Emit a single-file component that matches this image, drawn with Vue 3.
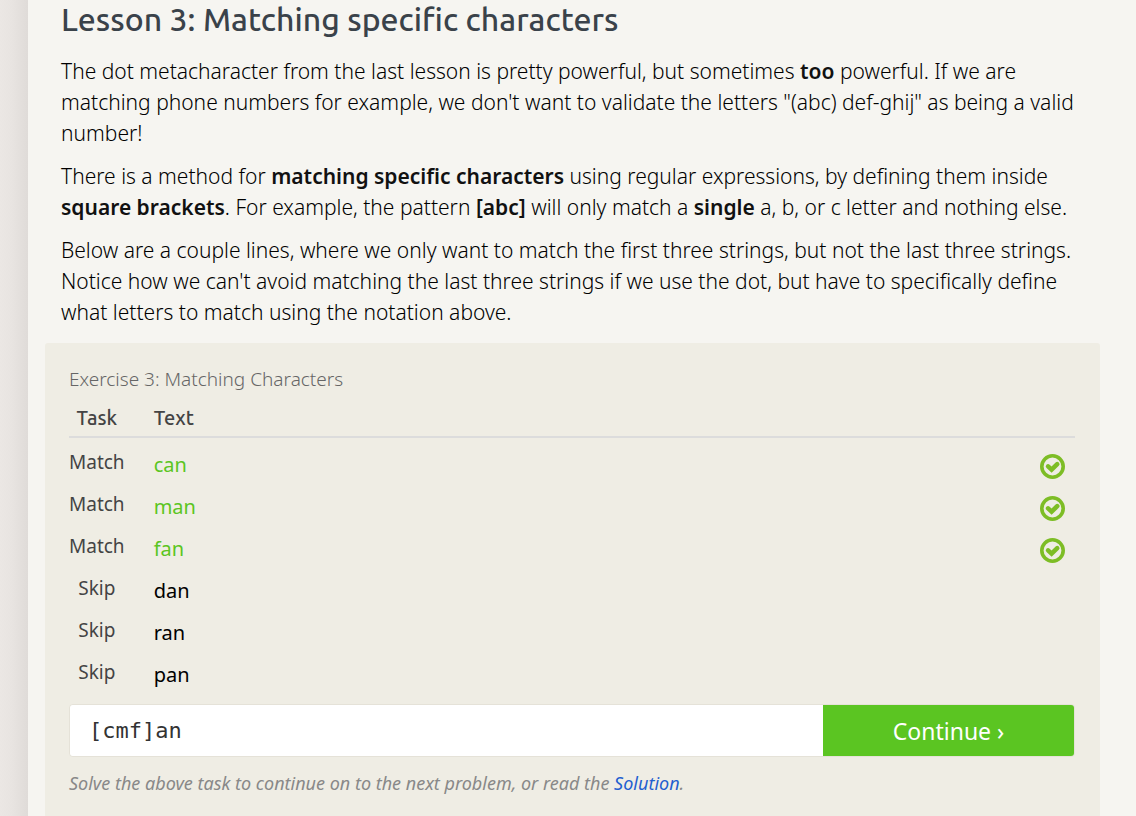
<script setup>
import { ref } from 'vue'

const pattern = ref('[cmf]an')
const rows = [
  { task: 'Match', text: 'can', solved: true },
  { task: 'Match', text: 'man', solved: true },
  { task: 'Match', text: 'fan', solved: true },
  { task: 'Skip', text: 'dan', solved: false },
  { task: 'Skip', text: 'ran', solved: false },
  { task: 'Skip', text: 'pan', solved: false },
]
</script>

<template>
  <div class="page">
    <main class="sheet">
      <section class="lesson">
        <h1>Lesson 3: Matching specific characters</h1>
        <p>
          The dot metacharacter from the last lesson is pretty powerful, but sometimes
          <strong>too</strong> powerful. If we are<br />
          matching phone numbers for example, we don't want to validate the letters
          "(abc) def-ghij" as being a valid<br />
          number!
        </p>
        <p>
          There is a method for <strong>matching specific characters</strong> using regular
          expressions, by defining them inside<br />
          <strong>square brackets</strong>. For example, the pattern <strong>[abc]</strong> will
          only match a <strong>single</strong> a, b, or c letter and nothing else.
        </p>
        <p>
          Below are a couple lines, where we only want to match the first three strings, but not
          the last three strings.<br />
          Notice how we can't avoid matching the last three strings if we use the dot, but have to
          specifically define<br />
          what letters to match using the notation above.
        </p>
      </section>

      <section class="exercise">
        <table>
          <caption>Exercise 3: Matching Characters</caption>
          <thead>
            <tr>
              <th class="task" scope="col">Task</th>
              <th scope="col">Text</th>
              <th class="result"></th>
            </tr>
          </thead>
          <tbody>
            <tr v-for="row in rows" :key="row.text">
              <td class="task">{{ row.task }}</td>
              <td class="text" :class="{ solved: row.solved }">{{ row.text }}</td>
              <td class="result">
                <svg v-if="row.solved" viewBox="0 0 25 25" role="img" aria-label="Solved">
                  <circle cx="12.5" cy="12.5" r="10.7" />
                  <path d="M8.1 12.4 11.6 15.6 17.2 10.2" />
                </svg>
              </td>
            </tr>
          </tbody>
        </table>
        <form @submit.prevent>
          <input v-model="pattern" type="text" aria-label="Pattern" spellcheck="false" />
          <button type="submit">Continue ›</button>
        </form>
        <p class="hint">
          Solve the above task to continue on to the next problem, or read the
          <a href="#">Solution</a>.
        </p>
      </section>
    </main>
  </div>
</template>

<style>
body {
  margin: 0;
  background: #f6f5f1;
}
</style>

<style scoped>
.page {
  box-sizing: border-box;
  min-height: 100vh;
  padding-left: 28px;
  background: linear-gradient(90deg, #ebe7e4 0, #e8e4e1 12px, #dfdbd8 28px, #f6f5f1 28px);
  color: #000;
  font: 300 21px/31px "Noto Sans", "Open Sans", sans-serif;
}
.sheet {
  padding: 0 36px 0 17px;
}
.lesson {
  padding: 0 0 15px 16px;
  white-space: nowrap;
}
h1 {
  margin: 0 0 18px;
  color: #3a424a;
  font: 500 32px/38px "Ubuntu", "Noto Sans", sans-serif;
}
p {
  margin: 0 0 12px;
}
.lesson p:last-child {
  margin-bottom: 0;
}
strong {
  color: #111;
  font-weight: 600;
}
.exercise {
  padding: 21px 25px 20px 24px;
  border-radius: 3px;
  background: #efede4;
}
table {
  width: 100%;
  border-collapse: collapse;
}
caption {
  color: #666;
  font-size: 19px;
  line-height: 30px;
  text-align: left;
}
th {
  height: 37px;
  padding: 5px 0 0;
  border-bottom: 2px solid #dcdcdc;
  color: #444;
  font: 500 20px/30px "Ubuntu", "Noto Sans", sans-serif;
  text-align: left;
}
td {
  height: 42px;
  padding: 0;
}
tbody::before {
  display: block;
  height: 5px;
  content: "";
}
.task {
  width: 54px;
  padding-right: 29px;
  text-align: center;
}
td.task {
  color: #444;
  font-size: 19px;
  font-weight: 400;
  line-height: 38px;
  vertical-align: top;
}
.text {
  font-size: 20px;
  font-weight: 400;
}
.solved {
  color: #5bc522;
}
.result {
  width: 35px;
}
svg {
  display: block;
  width: 25px;
  height: 25px;
  margin-top: 4px;
  fill: none;
  stroke: #7dbd25;
  stroke-width: 3.6;
}
svg path {
  stroke-width: 4.6;
  stroke-linecap: round;
}
form {
  display: flex;
  box-sizing: border-box;
  height: 53px;
  margin-top: 9px;
  overflow: hidden;
  border: 1px solid #e5e2d8;
  border-radius: 4px;
}
input {
  width: 75%;
  box-sizing: border-box;
  padding: 0 19px;
  border: 0;
  background: #fff;
  color: #333;
  font: 22px "DejaVu Sans Mono", monospace;
}
button {
  width: 25%;
  padding: 0;
  border: 0;
  background: #5bc522;
  color: #fff;
  font: 23px "Noto Sans", sans-serif;
}
.hint {
  margin: 11px 0 0;
  color: #888;
  font-size: 18px;
  font-style: italic;
  font-weight: 400;
  line-height: 30px;
}
a {
  color: #1f5fd0;
  text-decoration: none;
}
</style>
